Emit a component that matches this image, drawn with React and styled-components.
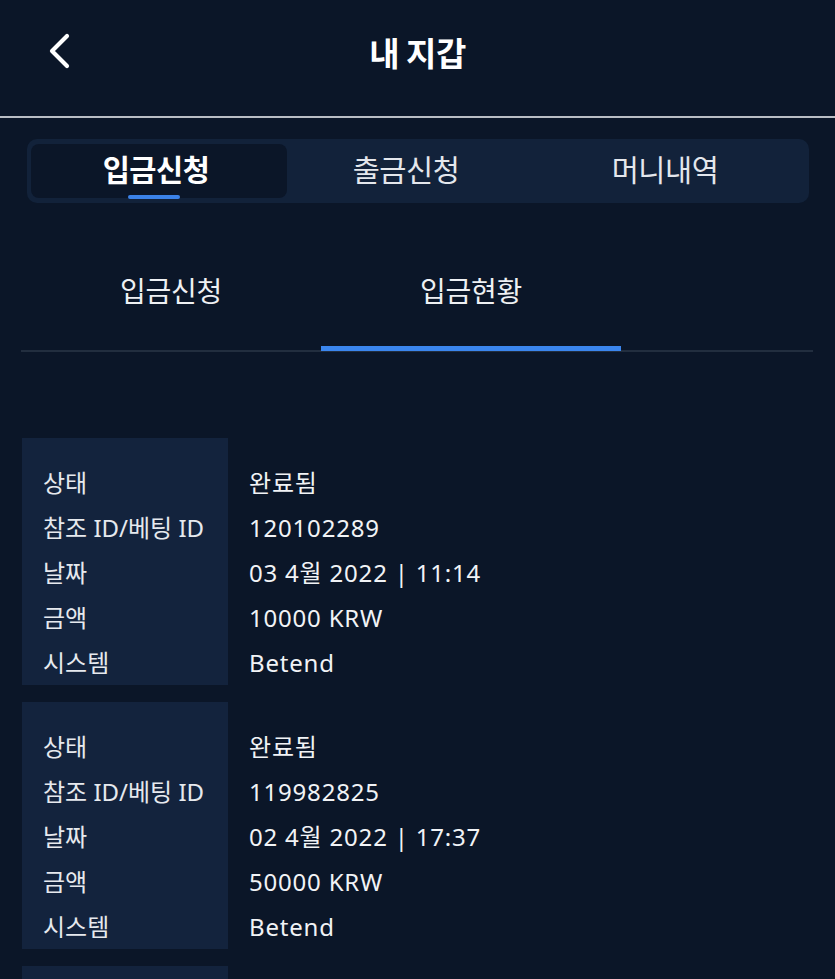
import React, { useState } from "react";
import styled, { createGlobalStyle } from "styled-components";

const Global = createGlobalStyle`
  html, body { margin: 0; padding: 0; background: #0b1628; }
  body { font-family: "Noto Sans", "Noto Sans CJK KR", sans-serif; color: #eef0f3; }
  * { box-sizing: border-box; }
`;

const Page = styled.div`
  width: 835px;
  min-height: 979px;
  background: #0b1628;
  overflow: hidden;
`;

const Header = styled.header`
  height: 116px;
  display: grid;
  grid-template-columns: 1fr auto 1fr;
  align-items: center;
  border-bottom: 2px solid #b9bdc4;
  box-sizing: content-box;
`;

const BackButton = styled.button`
  justify-self: start;
  margin-left: 44px;
  margin-top: -14px;
  width: 30px;
  height: 40px;
  padding: 0;
  border: 0;
  background: transparent;
  display: flex;
  align-items: center;
  justify-content: center;
`;

const Title = styled.h1`
  margin: -12px 0 0;
  font-family: "Noto Sans CJK KR", sans-serif;
  font-size: 33px;
  line-height: 40px;
  font-weight: 700;
  color: #ffffff;
  letter-spacing: -0.5px;
`;

const Segmented = styled.div`
  margin: 21px 26px 0 27px;
  height: 64px;
  padding: 5px 4px;
  background: #12223a;
  border-radius: 10px;
  display: grid;
  grid-template-columns: 256px 244px 1fr;
`;

const Segment = styled.button`
  position: relative;
  border: 0;
  border-radius: 8px;
  background: ${(p) => (p.$active ? "#0b1628" : "transparent")};
  color: ${(p) => (p.$active ? "#ffffff" : "#e4e7ec")};
  font-family: "Noto Sans CJK KR", sans-serif;
  font-size: 29.5px;
  font-weight: ${(p) => (p.$active ? 700 : 400)};
  padding: 0 6px 6px 0;
  display: flex;
  align-items: center;
  justify-content: center;
  cursor: pointer;
  letter-spacing: -0.5px;
`;

const SegmentBar = styled.span`
  position: absolute;
  left: 97px;
  bottom: -1px;
  width: 52px;
  height: 4px;
  border-radius: 2px;
  background: #3b82e8;
`;

const Tabs = styled.div`
  margin: 0 22px 0 21px;
  display: flex;
  border-bottom: 2px solid #222e3f;
`;

const Tab = styled.button`
  width: 300px;
  padding: 71px 0 40px;
  margin-bottom: -1px;
  border: 0;
  border-bottom: 5px solid ${(p) => (p.$active ? "#3b86ee" : "transparent")};
  background: transparent;
  color: #eef0f3;
  font-family: "Noto Sans CJK KR", sans-serif;
  font-size: 28px;
  line-height: 32px;
  font-weight: 400;
  cursor: pointer;
  letter-spacing: -0.3px;
`;

const List = styled.div`
  margin: 86px 0 0 22px;
  display: flex;
  flex-direction: column;
  gap: 17px;
`;

const Card = styled.div`
  display: grid;
  grid-template-columns: 206px 1fr;
`;

const Column = styled.div`
  padding: 22px 0 0 21px;
  height: 247px;
  background: ${(p) => (p.$label ? "#13233d" : "transparent")};
`;

const Line = styled.div`
  height: 45px;
  line-height: 45px;
  font-size: 24px;
  letter-spacing: ${(p) => (p.$label ? "0" : "0.8px")};
  color: ${(p) => (p.$label ? "#e6e9ee" : "#f1f3f6")};
  white-space: nowrap;
`;

const labels = ["상태", "참조 ID/베팅 ID", "날짜", "금액", "시스템"];

const records = [
  ["완료됨", "120102289", "03 4월 2022 | 11:14", "10000 KRW", "Betend"],
  ["완료됨", "119982825", "02 4월 2022 | 17:37", "50000 KRW", "Betend"],
  ["완료됨", "119870412", "01 4월 2022 | 09:02", "30000 KRW", "Betend"],
];

export default function App() {
  const [seg, setSeg] = useState(0);
  const [tab, setTab] = useState(1);
  const segs = ["입금신청", "출금신청", "머니내역"];
  return (
    <Page>
      <Global />
      <Header>
        <BackButton aria-label="back">
          <svg width="26" height="36" viewBox="0 0 26 36" fill="none">
            <polyline points="21,3 6,18 21,33" stroke="#ffffff" strokeWidth="4.2" strokeLinecap="round" strokeLinejoin="round" />
          </svg>
        </BackButton>
        <Title>내 지갑</Title>
        <span />
      </Header>
      <Segmented>
        {segs.map((s, i) => (
          <Segment key={s} $active={seg === i} onClick={() => setSeg(i)}>
            {s}
            {seg === i && <SegmentBar />}
          </Segment>
        ))}
      </Segmented>
      <Tabs>
        <Tab $active={tab === 0} onClick={() => setTab(0)}>입금신청</Tab>
        <Tab $active={tab === 1} onClick={() => setTab(1)}>입금현황</Tab>
      </Tabs>
      <List>
        {records.map((r, idx) => (
          <Card key={idx}>
            <Column $label>
              {labels.map((l) => (
                <Line $label key={l}>{l}</Line>
              ))}
            </Column>
            <Column>
              {r.map((v, j) => (
                <Line key={j}>{v}</Line>
              ))}
            </Column>
          </Card>
        ))}
      </List>
    </Page>
  );
}
